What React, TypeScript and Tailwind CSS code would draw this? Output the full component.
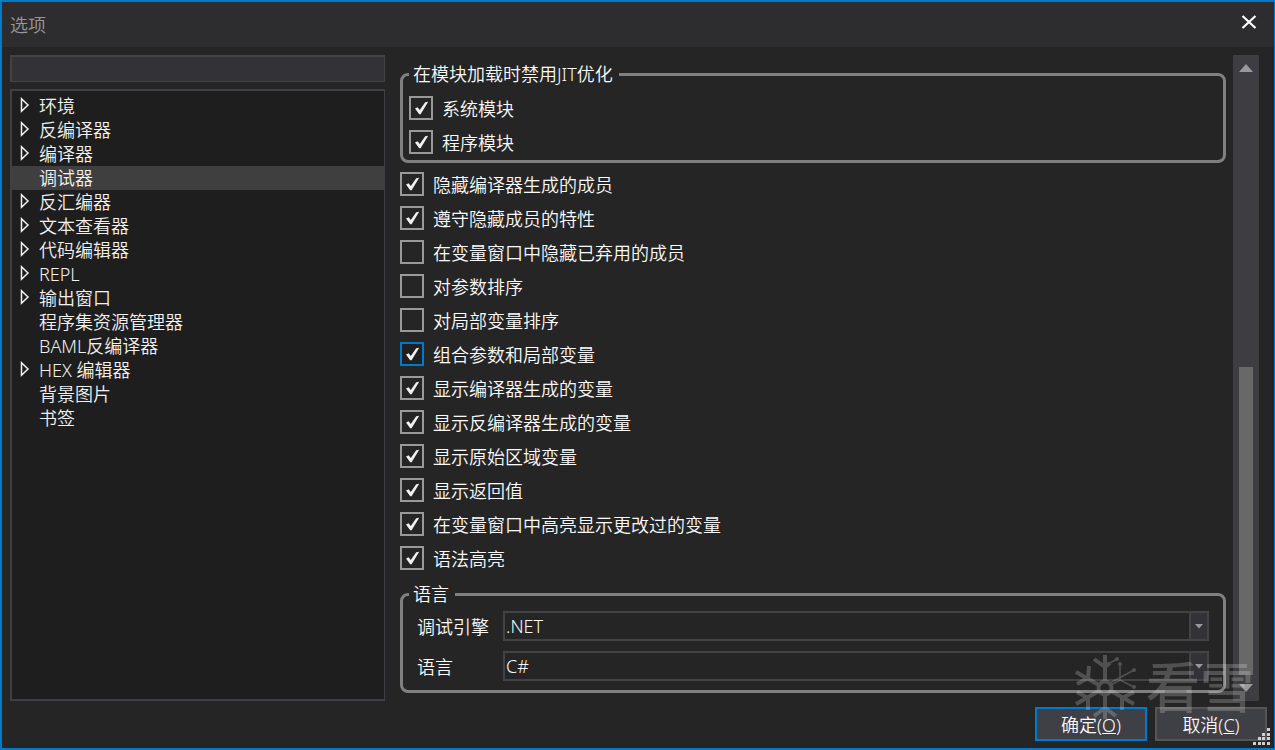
import type { ReactNode } from 'react';

const treeItems = [
  { label: '环境', expandable: true },
  { label: '反编译器', expandable: true },
  { label: '编译器', expandable: true },
  { label: '调试器', expandable: false, selected: true },
  { label: '反汇编器', expandable: true },
  { label: '文本查看器', expandable: true },
  { label: '代码编辑器', expandable: true },
  { label: 'REPL', expandable: true },
  { label: '输出窗口', expandable: true },
  { label: '程序集资源管理器', expandable: false },
  { label: 'BAML反编译器', expandable: false },
  { label: 'HEX 编辑器', expandable: true },
  { label: '背景图片', expandable: false },
  { label: '书签', expandable: false },
];

const moduleOptions = [
  { label: '系统模块', checked: true },
  { label: '程序模块', checked: true },
];

const debuggerOptions = [
  { label: '隐藏编译器生成的成员', checked: true },
  { label: '遵守隐藏成员的特性', checked: true },
  { label: '在变量窗口中隐藏已弃用的成员', checked: false },
  { label: '对参数排序', checked: false },
  { label: '对局部变量排序', checked: false },
  { label: '组合参数和局部变量', checked: true, active: true },
  { label: '显示编译器生成的变量', checked: true },
  { label: '显示反编译器生成的变量', checked: true },
  { label: '显示原始区域变量', checked: true },
  { label: '显示返回值', checked: true },
  { label: '在变量窗口中高亮显示更改过的变量', checked: true },
  { label: '语法高亮', checked: true },
];

type OptionProps = { label: string; checked: boolean; active?: boolean };

const Option = ({ label, checked, active }: OptionProps) => (
  <label className="flex h-6 items-center gap-[9px]">
    <span className="relative h-6 w-6 shrink-0">
      <input
        type="checkbox"
        defaultChecked={checked}
        className={`peer block h-6 w-6 appearance-none border-2 outline-none ${
          active ? 'border-[#007acc] bg-[#1f1f20]' : 'border-[#999999] bg-[#252526]'
        }`}
      />
      <svg
        viewBox="0 0 24 24"
        className="pointer-events-none absolute inset-0 hidden h-6 w-6 peer-checked:block"
        fill="#f1f1f1"
      >
        <path d="M6 12.6 8.6 11.2 10.8 14 16.2 6.3 19.2 5.7 11.6 18.2H10.2Z" />
      </svg>
    </span>
    <span className="pt-px">{label}</span>
  </label>
);

const Group = ({ title, children }: { title: string; children: ReactNode }) => (
  <fieldset className="min-w-0 rounded-lg border-[3px] border-[#808080] px-1.5">
    <legend className="pr-1.5 pl-1 leading-[23px]">{title}</legend>
    {children}
  </fieldset>
);

const Combo = ({ id, label, value }: { id: string; label: string; value: string }) => (
  <div className="flex h-[30px] items-center">
    <label htmlFor={id} className="w-[86px] shrink-0 pt-0.5">
      {label}
    </label>
    <div className="relative h-full flex-1">
      <select
        id={id}
        defaultValue={value}
        className="h-full w-full appearance-none border-2 border-[#434346] bg-[#252526] pr-6 pl-px outline-none"
      >
        <option>{value}</option>
      </select>
      <span className="pointer-events-none absolute inset-y-0 right-0 flex w-5 items-center justify-center border-2 border-[#434346] bg-[#333337]">
        <svg viewBox="0 0 8 5" className="h-[5px] w-2" fill="#999999">
          <path d="M0 0H8L4 4.5Z" />
        </svg>
      </span>
    </div>
  </div>
);

const ScrollBar = () => (
  <div className="flex w-[26px] shrink-0 flex-col items-center bg-[#3e3e42]">
    <button type="button" aria-label="向上滚动" className="flex h-[26px] w-full items-center justify-center">
      <svg viewBox="0 0 14 8" className="h-2 w-3.5" fill="#999999">
        <path d="M7 0 14 8H0Z" />
      </svg>
    </button>
    <div className="flex w-3.5 flex-1 flex-col">
      <div className="flex-[286]" />
      <div className="flex-[308] bg-[#686868]" />
    </div>
    <button type="button" aria-label="向下滚动" className="flex h-[26px] w-full items-center justify-center">
      <svg viewBox="0 0 14 8" className="h-2 w-3.5" fill="#999999">
        <path d="M0 0H14L7 8Z" />
      </svg>
    </button>
  </div>
);

const Watermark = () => (
  <div
    aria-hidden="true"
    className="pointer-events-none absolute right-5 bottom-7 flex items-center gap-2.5 text-white opacity-20"
  >
    <svg viewBox="0 0 62 66" className="h-[66px] w-[62px]" fill="none" stroke="currentColor" strokeWidth="4">
      <circle cx="31" cy="34" r="6.5" />
      <path d="M31 27V1M31 13 20 5M31 13 36 9M31 41V65M31 54 20 62M31 54 42 62" />
      <path d="M25 31 2 18M14 24 15 12M14 24 3 30M25 37 2 50M14 44 3 38M14 44 14 56" />
      <path d="M37 37 60 50M48 44 60 38M48 44 48 56" />
      <path d="M36 29 60 16M37 31 46 26 60 33M36 9 43 5M46 26V10" strokeWidth="1.5" />
      <g fill="currentColor" stroke="none">
        <circle cx="43" cy="5" r="2" />
        <circle cx="46" cy="10" r="2" />
        <circle cx="60" cy="16" r="2" />
        <circle cx="60" cy="33" r="2" />
      </g>
    </svg>
    <span className="text-[54px] leading-[54px] font-medium">看雪</span>
  </div>
);

const ResizeGrip = () => (
  <svg
    viewBox="0 0 17 17"
    className="pointer-events-none absolute right-1 bottom-[3px] h-[17px] w-[17px]"
    fill="#d0d0d0"
  >
    <path d="M14 0h3v3h-3zM14 5h3v3h-3zM9 5h3v3h-3zM14 9h3v3h-3zM9 9h3v3h-3zM5 9h3v3h-3zM14 14h3v3h-3zM9 14h3v3h-3zM5 14h3v3h-3zM0 14h3v3h-3z" />
  </svg>
);

const App = () => {
  return (
    <div className="relative flex min-h-screen flex-col border-2 border-r border-[#007acc] bg-[#252526] font-['Noto_Sans','Noto_Sans_CJK_SC',sans-serif] text-[18px] leading-6 font-[350] text-[#fafafa]">
      <header className="flex h-[45px] shrink-0 items-center justify-between bg-[#2d2d30] pr-[17px] pl-2">
        <h1 className="text-[#999999]">选项</h1>
        <button type="button" aria-label="关闭" className="mb-1.5">
          <svg viewBox="0 0 16 14" className="h-3.5 w-4" fill="none" stroke="#ffffff" strokeWidth="2.2">
            <path d="M1.5 1 14.5 13M14.5 1 1.5 13" />
          </svg>
        </button>
      </header>

      <div className="flex flex-1 pt-2 pr-[15px] pl-2">
        <aside className="flex w-[375px] shrink-0 flex-col gap-[7px]">
          <input
            type="text"
            aria-label="搜索选项"
            className="h-[27px] w-full border border-t-2 border-l-2 border-[#434346] bg-[#333337] px-1 outline-none"
          />
          <ul
            role="tree"
            className="flex-1 border-2 border-r border-[#3f3f46] bg-[#1e1e1e] pt-[3px] text-[#f1f1f1]"
          >
            {treeItems.map((item) => (
              <li
                key={item.label}
                role="treeitem"
                aria-selected={!!item.selected}
                className={`flex h-6 pl-2 ${item.selected ? 'bg-[#3f3f40]' : ''}`}
              >
                <span className="w-[19px] shrink-0 pt-[3px]">
                  {item.expandable && (
                    <svg viewBox="0 0 10 16" className="h-4 w-2.5" fill="none" stroke="#f1f1f1" strokeWidth="1.5">
                      <path d="M1.5 1.8V14.2L8 8Z" />
                    </svg>
                  )}
                </span>
                <span>{item.label}</span>
              </li>
            ))}
          </ul>
        </aside>

        <main className="flex min-w-0 flex-1 flex-col pt-2 pr-[7px] pl-[15px]">
          <Group title="在模块加载时禁用JIT优化">
            <div className="flex flex-col gap-2.5 pt-2.5 pb-1.5">
              {moduleOptions.map((option) => (
                <Option key={option.label} {...option} />
              ))}
            </div>
          </Group>

          <div className="flex flex-col gap-2.5 pt-[9px] pb-[13px]">
            {debuggerOptions.map((option) => (
              <Option key={option.label} {...option} />
            ))}
          </div>

          <Group title="语言">
            <div className="flex flex-col gap-2.5 px-2 pt-[5px] pb-[9px]">
              <Combo id="engine" label="调试引擎" value=".NET" />
              <Combo id="language" label="语言" value="C#" />
            </div>
          </Group>
        </main>

        <ScrollBar />
      </div>

      <footer className="flex justify-end gap-2 pt-1.5 pr-[7px] pb-[7px]">
        <button type="button" className="h-[34px] w-28 border-2 border-[#007acc] bg-[#3f3f46] pt-0.5">
          确定(<u>O</u>)
        </button>
        <button type="button" className="h-[34px] w-28 border-2 border-[#555555] bg-[#3f3f46] pt-0.5">
          取消(<u>C</u>)
        </button>
      </footer>

      <Watermark />
      <ResizeGrip />
    </div>
  );
};

export default App;
